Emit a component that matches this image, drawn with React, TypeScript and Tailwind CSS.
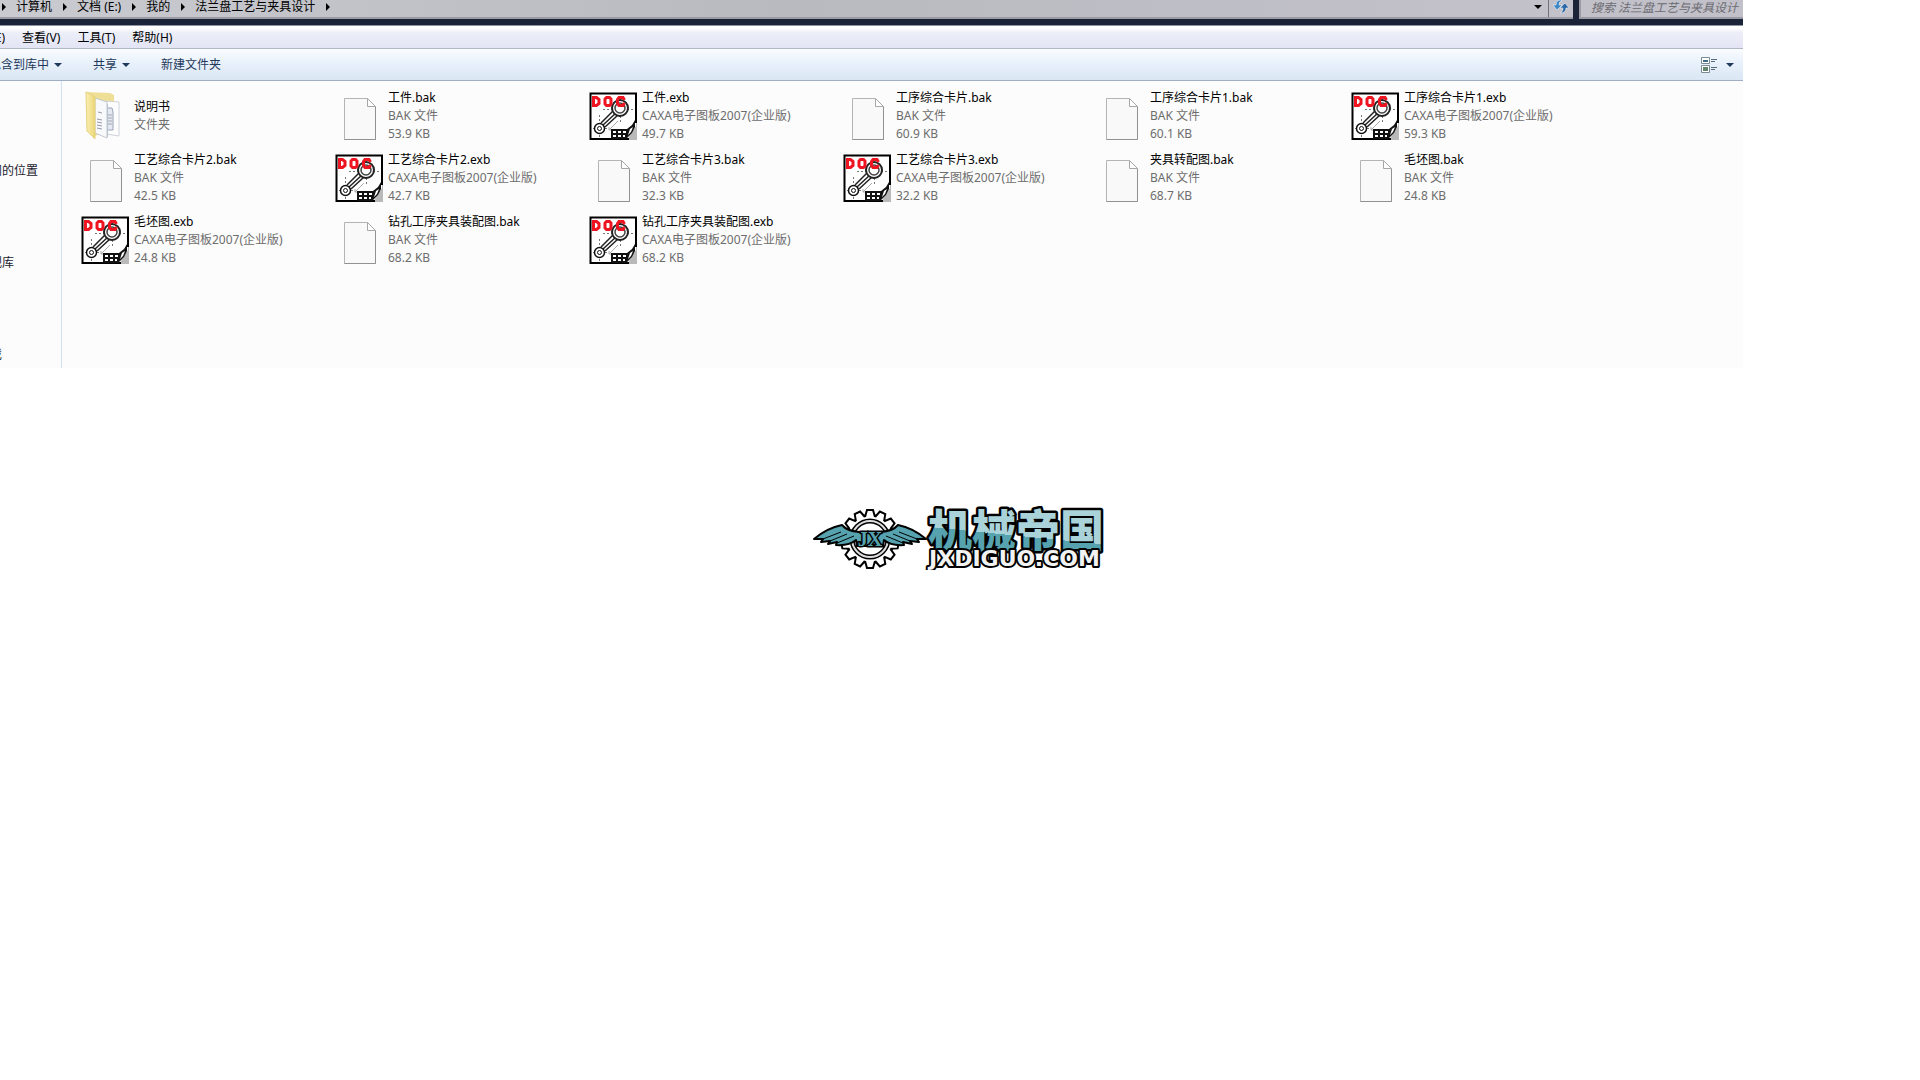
import { ReactNode } from "react";

type FileEntry = { name: string; type: string; size?: string; kind: "folder" | "bak" | "exb" };

const BAK = "BAK 文件";
const EXB = "CAXA电子图板2007(企业版)";

const files: FileEntry[] = [
  { name: "说明书", type: "文件夹", kind: "folder" },
  { name: "工件.bak", type: BAK, size: "53.9 KB", kind: "bak" },
  { name: "工件.exb", type: EXB, size: "49.7 KB", kind: "exb" },
  { name: "工序综合卡片.bak", type: BAK, size: "60.9 KB", kind: "bak" },
  { name: "工序综合卡片1.bak", type: BAK, size: "60.1 KB", kind: "bak" },
  { name: "工序综合卡片1.exb", type: EXB, size: "59.3 KB", kind: "exb" },
  { name: "工艺综合卡片2.bak", type: BAK, size: "42.5 KB", kind: "bak" },
  { name: "工艺综合卡片2.exb", type: EXB, size: "42.7 KB", kind: "exb" },
  { name: "工艺综合卡片3.bak", type: BAK, size: "32.3 KB", kind: "bak" },
  { name: "工艺综合卡片3.exb", type: EXB, size: "32.2 KB", kind: "exb" },
  { name: "夹具转配图.bak", type: BAK, size: "68.7 KB", kind: "bak" },
  { name: "毛坯图.bak", type: BAK, size: "24.8 KB", kind: "bak" },
  { name: "毛坯图.exb", type: EXB, size: "24.8 KB", kind: "exb" },
  { name: "钻孔工序夹具装配图.bak", type: BAK, size: "68.2 KB", kind: "bak" },
  { name: "钻孔工序夹具装配图.exb", type: EXB, size: "68.2 KB", kind: "exb" },
];

const crumbs = ["计算机", "文档 (E:)", "我的", "法兰盘工艺与夹具设计"];

function FolderIcon() {
  return (
    <svg width="48" height="52" viewBox="0 0 48 52" aria-hidden="true">
      <defs>
        <linearGradient id="folder" x1="0" x2="1">
          <stop offset="0" stopColor="#fbf0b4" />
          <stop offset="1" stopColor="#ecd678" />
        </linearGradient>
      </defs>
      <path d="M5 2 L29 3 L33 5 V38 L14 46 Z" fill="#efdf96" />
      <path d="M24 11 L38 12 V46 L25 44 Z" fill="#fdfdfd" stroke="#cfd2d8" />
      <path d="M27 18 h4 l1 4 v18 h-5" fill="#e6e9f2" stroke="#9aa3b8" />
      <path d="M27 25 h4 M27 28 h4 M27 31 h4 M27 34 h4" stroke="#a0a6b6" />
      <path d="M14 8 L26 12 V48 L14 43 Z" fill="#f8f9fb" stroke="#c4c8cf" />
      <path d="M17 22 l4 1 M16 29 l5 1 M16 32 l5 1 M16 35 l5 1 M16 38 l5 1" stroke="#9699a4" />
      <path d="M26.500 14 V47" stroke="#b3c4cd" />
      <path d="M5 2 L14 7 V49 L6 41 Z" fill="url(#folder)" stroke="#e6d27c" />
    </svg>
  );
}

function BakIcon() {
  return (
    <svg width="48" height="52" viewBox="0 0 48 52" aria-hidden="true">
      <path d="M9.500 8.500 H32 L40.500 17 V49.500 H9.500 Z" fill="#f9f9f9" stroke="#b4b4b4" />
      <path d="M40.500 17 V49.500 H9.500" fill="none" stroke="#919191" />
      <path d="M32.500 8.500 V16.500 H40.500 Z" fill="#fff" stroke="#a6a6a6" />
    </svg>
  );
}

function ExbIcon() {
  return (
    <svg width="48" height="52" viewBox="0 0 48 52" aria-hidden="true">
      <rect x="1" y="3" width="47" height="47" fill="#b9b9b9" />
      <path d="M1 3 H47 V36 L38 50 H1 Z" fill="#fff" />
      <path d="M47 33 V3.500 H1.500 V49 H40" fill="none" stroke="#000" strokeWidth="2" />
      <path d="M14 19.500 h31 M10.500 25 v24 M31.500 26 v8 M4 38.500 h14" stroke="#777" strokeDasharray="2 2" />
      <path d="M12 33 L25 20 M14 35 L27 23 M16 37 L29 25" stroke="#222" strokeWidth="1.500" />
      <path d="M20 40 L29 31 M20 37 v3 h3" stroke="#aaa" fill="none" />
      <circle cx="31" cy="18" r="8" fill="#fff" stroke="#222" strokeWidth="2" />
      <circle cx="31" cy="18" r="5" fill="none" stroke="#444" strokeWidth="1.500" />
      <circle cx="10.500" cy="38.500" r="5" fill="#fff" stroke="#111" strokeWidth="1.500" />
      <circle cx="10.500" cy="38.500" r="2" fill="none" stroke="#111" />
      <path d="M22 39 H38 L43 35 L46 30 V37 L43 43 L37 49 H22 Z" fill="#111" />
      <path d="M24 41 h3 v2 h-3z M29 41 h3 v2 h-3z M34 41 h3 v2 h-3z M24 45 h3 v2 h-3z M29 45 h3 v2 h-3z M34 45 h2 v2 h-2z M41 39 l3 -2 l-2 5 l-3 3z" fill="#fff" />
      <path d="M4.500 7.500 h3 l2.500 2 v4 l-2.500 2 h-3z M17.500 7.500 h3 l1.500 1.500 v5 l-1.500 1.500 h-3 l-1.500 -1.500 v-5z M35.500 10 l-1.500 -2.500 h-4 l-1.500 2 v4 l1.500 2 h4 l1.500 -2.500" fill="none" stroke="#ee1520" strokeWidth="3" />
    </svg>
  );
}

function FileIcon({ kind }: { kind: FileEntry["kind"] }) {
  if (kind === "folder") return <FolderIcon />;
  if (kind === "bak") return <BakIcon />;
  return <ExbIcon />;
}

function CrumbArrow() {
  return (
    <svg width="4" height="8" viewBox="0 0 4 8" aria-hidden="true">
      <path d="M0 0 L4 4 L0 8 Z" fill="#000" />
    </svg>
  );
}

function DownArrow({ color = "#1e395b" }: { color?: string }) {
  return (
    <svg width="8" height="4" viewBox="0 0 8 4" aria-hidden="true">
      <path d="M0 0 H8 L4 4 Z" fill={color} />
    </svg>
  );
}

// Keeps the right end of a label that runs off the left edge of the window
function Clipped({ width, children }: { width: string; children: ReactNode }) {
  return <span className={`flex justify-end overflow-hidden whitespace-nowrap ${width}`}>{children}</span>;
}

function AddressBar() {
  return (
    <div className="flex h-[26px] items-start gap-[6px] border-b border-[#8e95a2] bg-[#1a2338]">
      <div className="flex h-[19px] flex-1 items-start border-b-2 border-[#9a9ba3] bg-linear-to-r from-[#c9cbd0] via-[#b9b9c0] to-[#c3c2ca]">
        <nav className="flex flex-1 items-center leading-[14px] text-black">
          <span className="w-4 pl-[2px]">
            <CrumbArrow />
          </span>
          {crumbs.map((crumb) => (
            <span key={crumb} className="flex items-center">
              <button className="whitespace-nowrap">{crumb}</button>
              <span className="flex w-[25px] justify-center">
                <CrumbArrow />
              </span>
            </span>
          ))}
        </nav>
        <button aria-label="历史记录" className="flex h-[14px] w-5 items-center justify-center">
          <DownArrow color="#000" />
        </button>
        <button aria-label="刷新" className="flex h-[17px] w-[25px] items-start justify-center border-l border-[#6f707a]">
          <svg width="16" height="14" viewBox="0 0 16 14" aria-hidden="true">
            <path d="M9 1 Q6 1 6 5 H9 L4 10 L0 5 H3 Q3 0 8 0 Z" fill="#3f86c4" stroke="#e8f0f7" strokeWidth="0.600" />
            <path d="M7 13 Q10 12 10 8 H7 L12 3 L16 8 H13 Q13 13 7 13 Z" fill="#2c68a6" stroke="#e8f0f7" strokeWidth="0.600" />
          </svg>
        </button>
      </div>
      <input
        aria-label="搜索"
        placeholder="搜索 法兰盘工艺与夹具设计"
        className="h-[19px] w-[164px] border-b-2 border-l-2 border-[#9a9ba3] bg-[#c2c1c9] pb-[2px] pl-[10px] italic leading-[14px] placeholder:text-[#6b6b72]"
      />
    </div>
  );
}

function MenuBar() {
  return (
    <div className="flex h-[23px] items-center gap-[17px] border-b border-[#b3b8c6] bg-linear-to-b from-white from-10% via-[#eceef8] via-30% to-[#e3e5f5] pt-[2px] text-black">
      <button>
        <Clipped width="w-[5px]">编辑(E)</Clipped>
      </button>
      <button>查看(V)</button>
      <button>工具(T)</button>
      <button>帮助(H)</button>
    </div>
  );
}

function Toolbar() {
  return (
    <div className="flex h-8 items-center border-b border-[#a0afc3] bg-linear-to-b from-[#fafcff] via-[#e8f1fb] via-45% to-[#dbe6f4] text-[#1e395b]">
      <button className="flex items-center gap-[5px]">
        <Clipped width="w-[49px]">包含到库中</Clipped>
        <DownArrow />
      </button>
      <button className="ml-[31px] flex items-center gap-[5px]">
        共享
        <DownArrow />
      </button>
      <button className="ml-[31px]">新建文件夹</button>
      <button aria-label="更改您的视图" className="mr-[9px] ml-auto flex items-center gap-[9px]">
        <svg width="16" height="16" viewBox="0 0 16 16" aria-hidden="true">
          <path d="M0.500 0.500 h8 v6 h-8z M0.500 8.500 h8 v7 h-8z" fill="#fff" stroke="#7c8a92" />
          <path d="M2 3 h5 v2 h-5z" fill="#3d6d86" />
          <path d="M2 10 h5 v4 h-5z" fill="#63856f" />
          <path d="M10 2.500 h6 M10 4.500 h4 M10 10.500 h6 M10 12.500 h4" stroke="#59697c" />
        </svg>
        <DownArrow />
      </button>
    </div>
  );
}

function Sidebar() {
  return (
    <aside className="flex w-[62px] shrink-0 flex-col gap-[74px] border-r border-[#d2e0ef] pt-[81px] leading-[18px] text-[#1a1a2e]">
      <Clipped width="w-[38px]">最近访问的位置</Clipped>
      <Clipped width="w-[14px]">影视库</Clipped>
      <Clipped width="w-[2px]">游戏</Clipped>
    </aside>
  );
}

function FileGrid() {
  return (
    <ul className="grid flex-1 grid-cols-[repeat(auto-fill,254px)] content-start gap-y-2 pt-2 pl-[19px]">
      {files.map((file) => (
        <li key={file.name} className="flex h-[54px] items-center gap-[5px] whitespace-nowrap leading-[18px]">
          <FileIcon kind={file.kind} />
          <div>
            <p className="text-black">{file.name}</p>
            <p className="text-[#6d6d6d]">{file.type}</p>
            {file.size && <p className="text-[#6d6d6d]">{file.size}</p>}
          </div>
        </li>
      ))}
    </ul>
  );
}

const teeth = Array.from({ length: 14 }, (_, i) => (i * 360) / 14);

function Logo() {
  return (
    <svg width="294" height="64" viewBox="0 0 294 64" role="img" aria-label="机械帝国 JXDIGUO.COM">
      <defs>
        <linearGradient id="shine" gradientUnits="userSpaceOnUse" x1="210" y1="0" x2="204" y2="60">
          <stop offset="0.500" stopColor="#a9d3d9" />
          <stop offset="0.500" stopColor="#56a2ae" />
        </linearGradient>
      </defs>
      <g transform="translate(57 33)">
        <circle r="24" fill="#fff" stroke="#000" strokeWidth="2" />
        {teeth.map((angle) => (
          <path key={angle} d="M-5 -22 L-3 -29 H3 L5 -22" transform={`rotate(${angle})`} fill="#fff" stroke="#000" strokeWidth="2" />
        ))}
        <circle r="22" fill="#fff" />
        <circle r="18" fill="none" stroke="#000" strokeWidth="5" />
        <circle r="18" fill="none" stroke="#ddd" strokeWidth="2" />
      </g>
      <path d="M1 33 Q14 22 29 19 Q34 25 46 26 H68 Q80 25 85 19 Q100 22 113 33 L104 33 L106 36 L97 35 L99 38 L90 36 L91 39 Q78 40 71 34 L70 40 H44 L43 34 Q36 40 23 39 L24 36 L15 38 L17 35 L8 36 L10 33 Z" fill="#56a2ae" stroke="#000" strokeWidth="2" strokeLinejoin="round" />
      <path d="M10 33 L28 26 M17 35 L34 28 M24 37 L41 30 M104 33 L86 26 M97 35 L80 28 M90 37 L73 30" stroke="#000" />
      <text x="57" y="40" textAnchor="middle" fontSize="20" fill="#56a2ae" stroke="#000" strokeWidth="3" paintOrder="stroke" className="font-['Liberation_Serif',serif] font-bold">
        JX
      </text>
      <text x="115" y="41" fontSize="44" fill="url(#shine)" stroke="#000" strokeWidth="5" strokeLinejoin="round" paintOrder="stroke" className="font-['Noto_Sans_CJK_SC',sans-serif] font-black">
        机械帝国
      </text>
      <text x="116" y="60" fontSize="22" fill="#f2f2f2" stroke="#000" strokeWidth="4" strokeLinejoin="round" paintOrder="stroke" className="font-['DejaVu_Sans',sans-serif] font-bold">
        JXDIGUO.COM
      </text>
    </svg>
  );
}

export default function App() {
  return (
    <div className="min-h-screen bg-white font-['Noto_Sans','Noto_Sans_CJK_SC',sans-serif] text-[12px]">
      <div className="pr-[177px]">
        <AddressBar />
        <MenuBar />
        <Toolbar />
        <main className="flex min-h-[287px] bg-[#fcfcfc]">
          <Sidebar />
          <FileGrid />
        </main>
      </div>
      <footer className="flex justify-center pt-[138px]">
        <Logo />
      </footer>
    </div>
  );
}
